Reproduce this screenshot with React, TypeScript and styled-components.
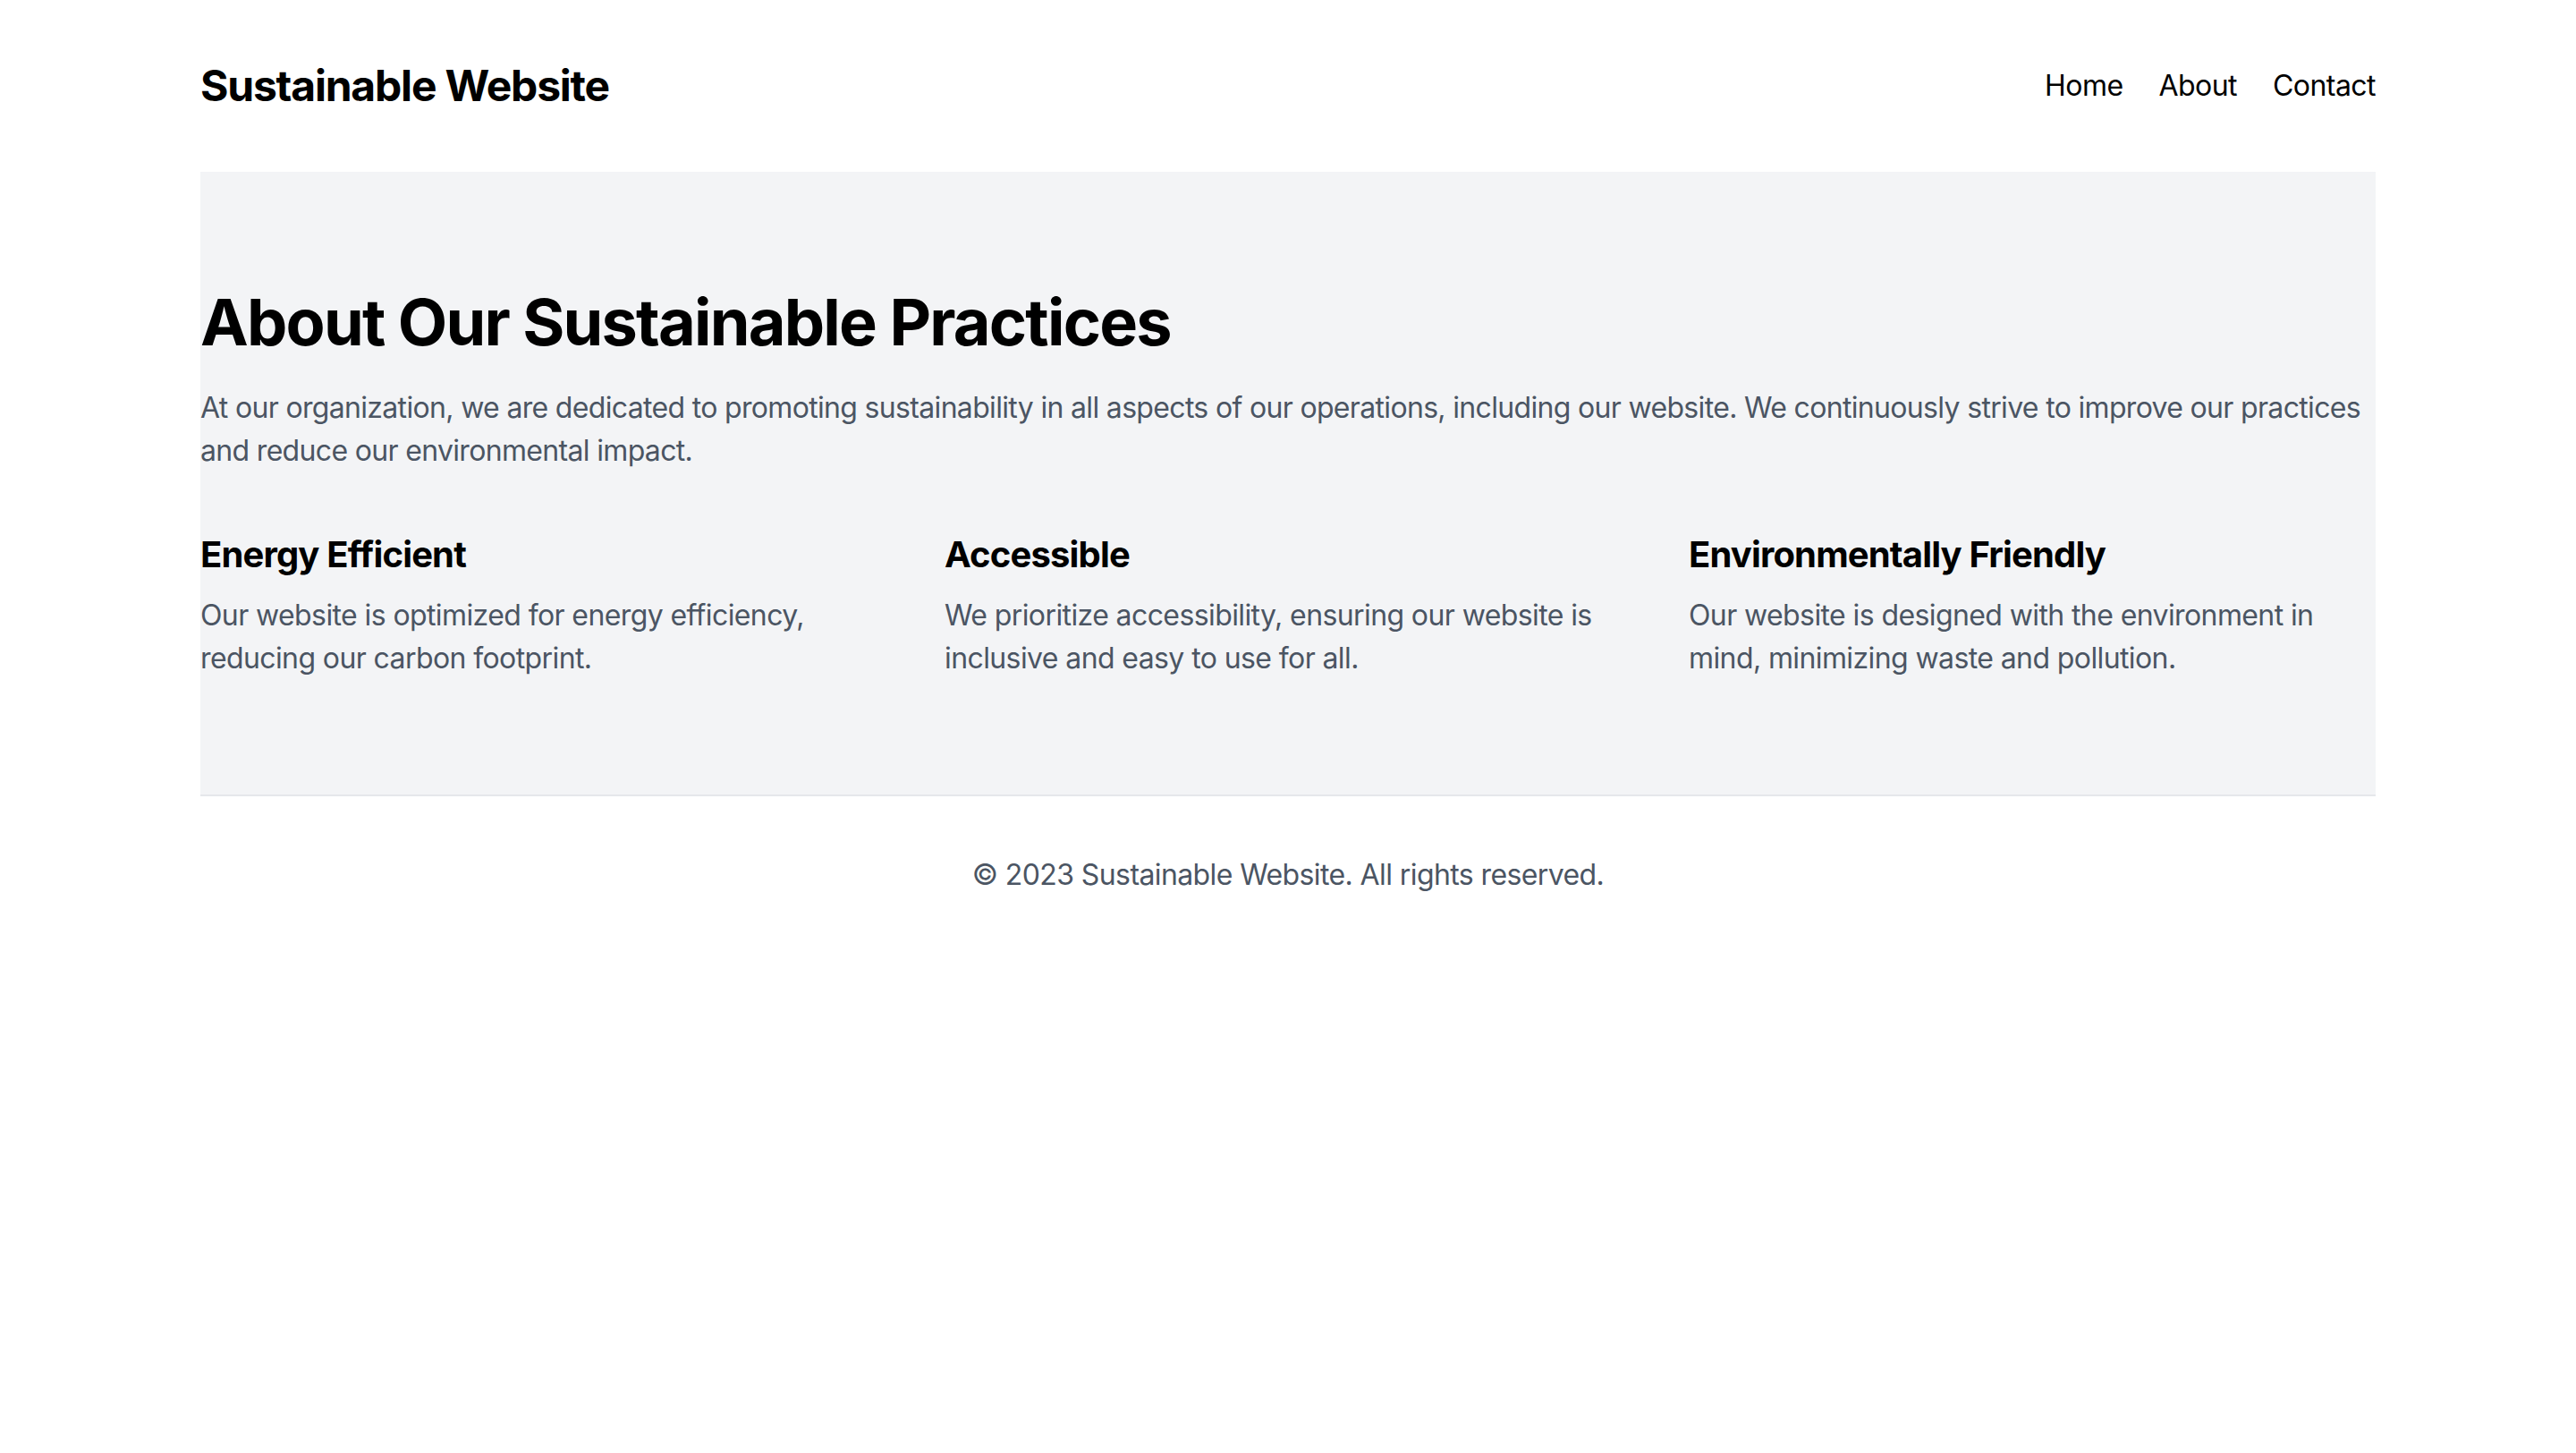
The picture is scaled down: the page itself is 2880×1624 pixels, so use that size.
import React from "react";
import styled, { createGlobalStyle } from "styled-components";

const GlobalStyle = createGlobalStyle`
  html, body {
    margin: 0;
    padding: 0;
    background: #ffffff;
    font-family: Inter, "Noto Sans", "Liberation Sans", sans-serif;
    -webkit-font-smoothing: antialiased;
  }
  * { box-sizing: border-box; }
`;

const Container = styled.div`
  width: 2432px;
  margin: 0 auto;
`;

const Header = styled.header`
  display: flex;
  align-items: center;
  justify-content: space-between;
  padding: 64px 0;
`;

const Brand = styled.h1`
  margin: 0;
  font-size: 48px;
  line-height: 64px;
  font-weight: 700;
  color: #000;
  letter-spacing: -1.2px;
`;

const Nav = styled.nav`
  display: flex;
  gap: 40px;
`;

const NavLink = styled.a`
  font-size: 32px;
  line-height: 48px;
  color: #000;
  text-decoration: none;
  letter-spacing: -0.55px;
`;

const Section = styled.section`
  background: #f3f4f6;
  padding: 128px 0;
`;

const Title = styled.h2`
  margin: 0 0 32px;
  font-size: 72px;
  line-height: 80px;
  font-weight: 700;
  color: #000;
  letter-spacing: -1.8px;
`;

const Lead = styled.p`
  margin: 0 0 64px;
  font-size: 32px;
  line-height: 48px;
  color: #4b5563;
  letter-spacing: -0.67px;
`;

const Grid = styled.div`
  display: grid;
  grid-template-columns: repeat(3, 1fr);
  gap: 64px;
`;

const Feature = styled.div``;

const FeatureTitle = styled.h3`
  margin: 0 0 16px;
  font-size: 40px;
  line-height: 56px;
  font-weight: 700;
  color: #000;
  letter-spacing: -0.85px;
`;

const FeatureText = styled.p`
  margin: 0;
  font-size: 32px;
  line-height: 48px;
  color: #4b5563;
  letter-spacing: -0.6px;
`;

const Footer = styled.footer`
  border-top: 2px solid #e5e7eb;
  padding: 64px 0;
  text-align: center;
`;

const FooterText = styled.p`
  margin: 0;
  font-size: 32px;
  line-height: 48px;
  color: #4b5563;
  letter-spacing: -0.6px;
`;

const features = [
  {
    title: "Energy Efficient",
    text: "Our website is optimized for energy efficiency, reducing our carbon footprint.",
  },
  {
    title: "Accessible",
    text: "We prioritize accessibility, ensuring our website is inclusive and easy to use for all.",
  },
  {
    title: "Environmentally Friendly",
    text: "Our website is designed with the environment in mind, minimizing waste and pollution.",
  },
];

export default function App() {
  return (
    <>
      <GlobalStyle />
      <Container>
        <Header>
          <Brand>Sustainable Website</Brand>
          <Nav>
            <NavLink href="#">Home</NavLink>
            <NavLink href="#">About</NavLink>
            <NavLink href="#">Contact</NavLink>
          </Nav>
        </Header>
        <Section>
          <Title>About Our Sustainable Practices</Title>
          <Lead>
            At our organization, we are dedicated to promoting sustainability in all aspects of our
            operations, including our website. We continuously strive to improve our practices and
            reduce our environmental impact.
          </Lead>
          <Grid>
            {features.map((f) => (
              <Feature key={f.title}>
                <FeatureTitle>{f.title}</FeatureTitle>
                <FeatureText>{f.text}</FeatureText>
              </Feature>
            ))}
          </Grid>
        </Section>
        <Footer>
          <FooterText>© 2023 Sustainable Website. All rights reserved.</FooterText>
        </Footer>
      </Container>
    </>
  );
}
